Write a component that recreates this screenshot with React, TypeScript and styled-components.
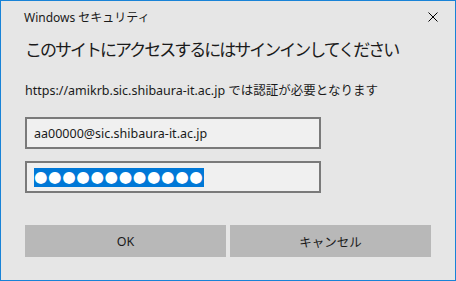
import React from "react";
import styled, { createGlobalStyle } from "styled-components";

const Global = createGlobalStyle`
  html, body { margin: 0; padding: 0; background: #e6e6e6; }
  body { font-family: "Noto Sans", "Noto Sans CJK JP", sans-serif; }
  * { box-sizing: border-box; }
`;

const Frame = styled.div`
  width: 456px;
  height: 281px;
  border: 1px solid #1883d7;
  background: #e6e6e6;
  display: flex;
  flex-direction: column;
  color: #000;
`;

const TitleBar = styled.div`
  display: flex;
  align-items: center;
  justify-content: space-between;
  height: 30px;
  padding: 2px 17px 0 23px;
  font-size: 12px;
  color: #1a1a1a;
`;

const Close = styled.svg`
  width: 10px;
  height: 10px;
  display: block;
`;

const Body = styled.div`
  display: flex;
  flex-direction: column;
  padding: 0 24px;
`;

const Heading = styled.div`
  font-family: "Noto Sans CJK JP", sans-serif;
  font-size: 17px;
  letter-spacing: -2px;
  line-height: 24px;
  margin-top: 6px;
  color: #1a1a1a;
`;

const Message = styled.div`
  font-size: 12.5px;
  line-height: 16px;
  margin-top: 22px;
  color: #1a1a1a;
  white-space: nowrap;
`;

const Field = styled.div`
  width: 296px;
  height: 32px;
  border: 2px solid #7a7a7a;
  background: #f0f0f0;
  display: flex;
  align-items: center;
  padding-left: 7px;
  font-size: 12.5px;
  margin-top: ${(p: { $gap: number }) => p.$gap}px;
  color: #1a1a1a;
`;

const Selection = styled.span`
  background: #0078d7;
  color: #fff;
  font-family: "DejaVu Sans", sans-serif;
  font-size: 15.5px;
  line-height: 19px;
  height: 19px;
  letter-spacing: 0.6px;
  display: inline-block;
  white-space: nowrap;
  overflow: hidden;
`;

const Buttons = styled.div`
  display: flex;
  gap: 4px;
  margin-top: 32px;
`;

const Button = styled.div`
  width: 201px;
  height: 32px;
  background: #b8b8b8;
  display: flex;
  align-items: center;
  justify-content: center;
  font-size: 12.5px;
  color: #1a1a1a;
`;

export default function App() {
  return (
    <>
      <Global />
      <Frame>
        <TitleBar>
          <span>Windows セキュリティ</span>
          <Close viewBox="0 0 10 10">
            <path d="M0.5 0.5 L9.5 9.5 M9.5 0.5 L0.5 9.5" stroke="#000" strokeWidth="1" fill="none" />
          </Close>
        </TitleBar>
        <Body>
          <Heading>このサイトにアクセスするにはサインインしてください</Heading>
          <Message>https://amikrb.sic.shibaura-it.ac.jp では認証が必要となります</Message>
          <Field $gap={18}>aa00000@sic.shibaura-it.ac.jp</Field>
          <Field $gap={12}>
            <Selection>●●●●●●●●●●●●</Selection>
          </Field>
          <Buttons>
            <Button>OK</Button>
            <Button>キャンセル</Button>
          </Buttons>
        </Body>
      </Frame>
    </>
  );
}
